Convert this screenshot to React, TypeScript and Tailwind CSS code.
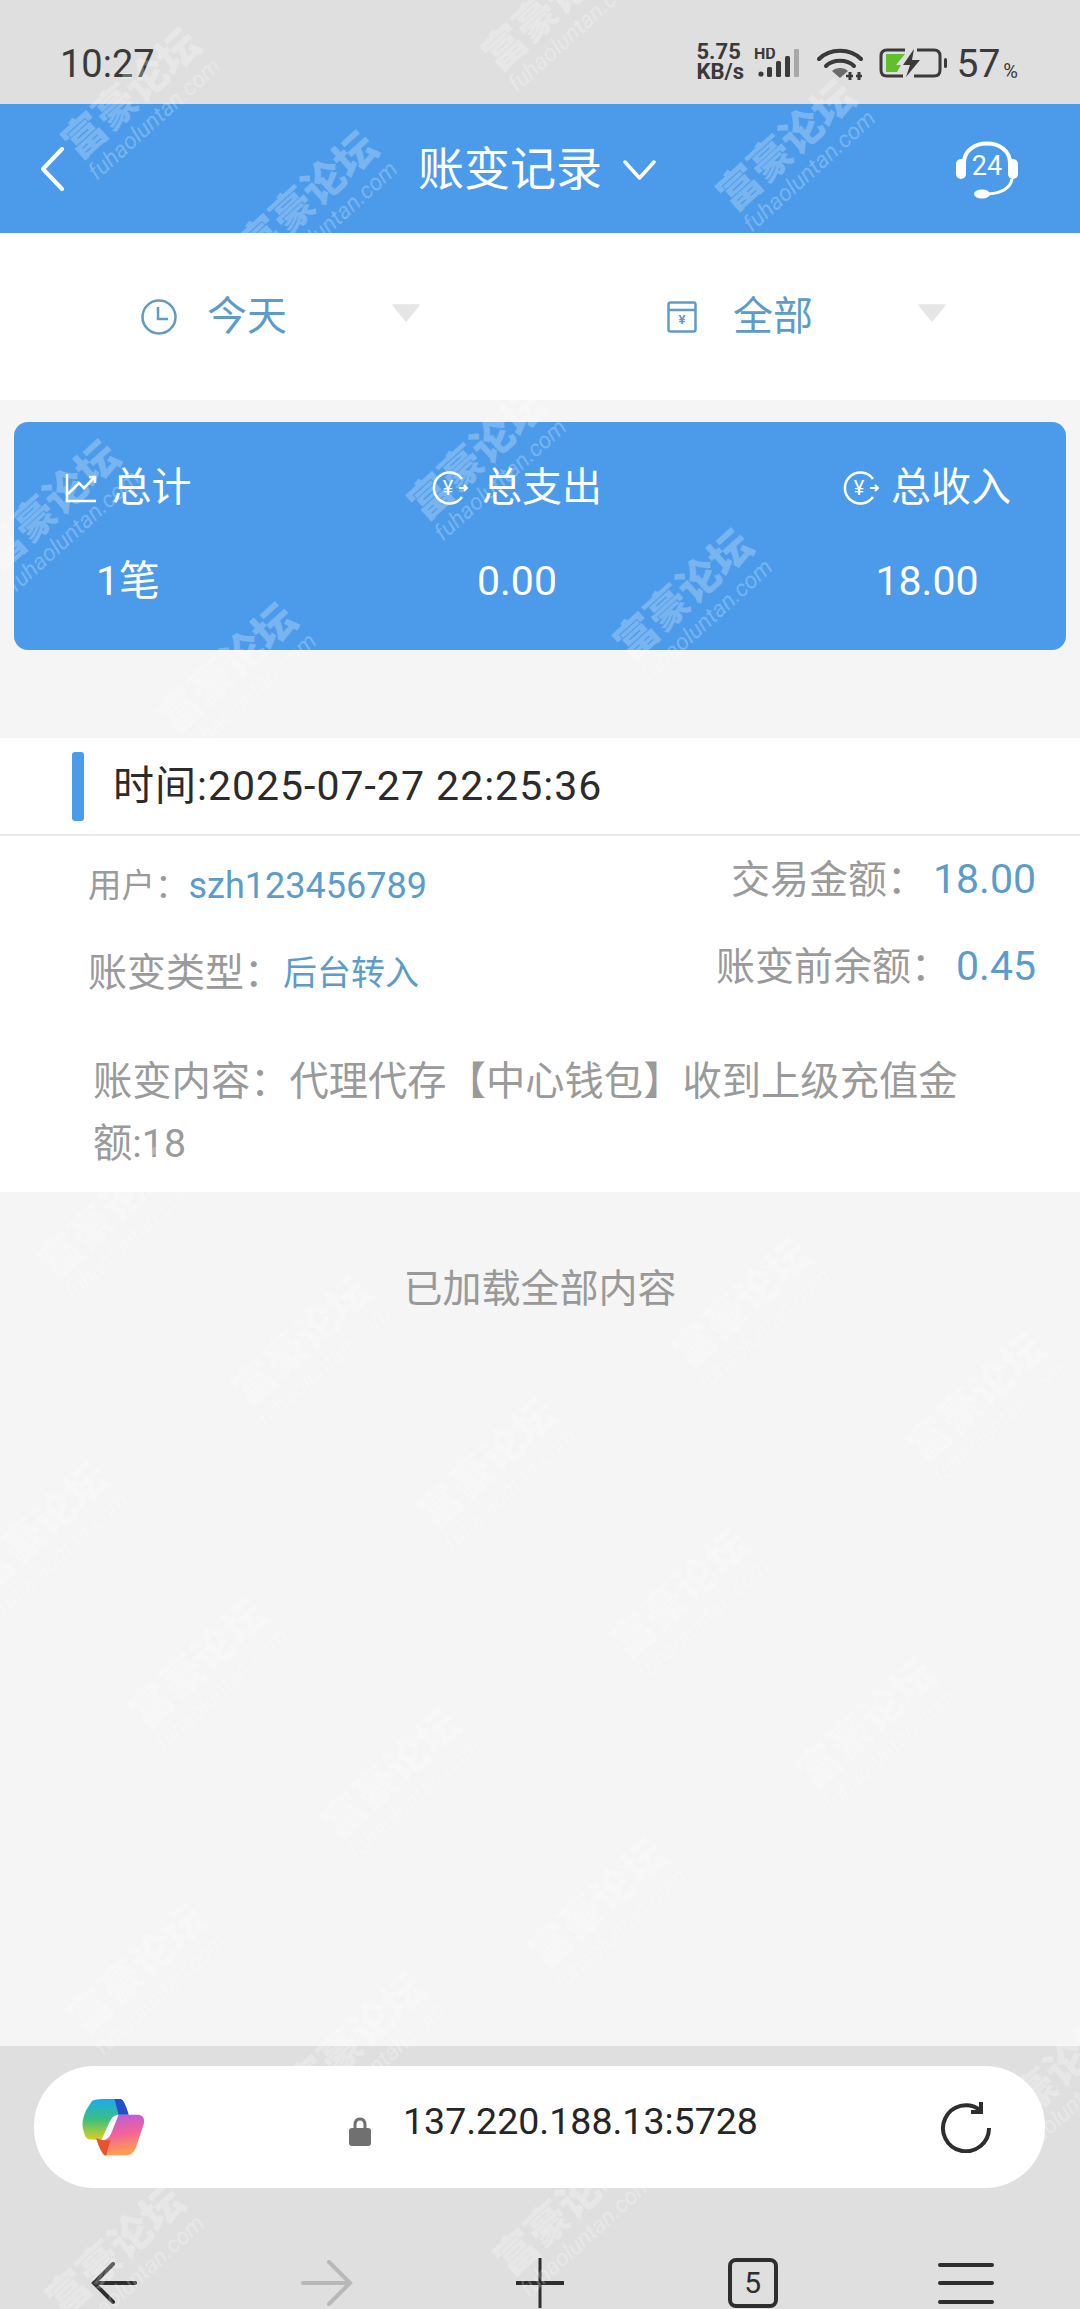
const watermarks = [
  "left-[140px] top-[103px]",
  "left-[317px] top-[206px]",
  "left-[795px] top-[155px]",
  "left-[560px] top-[15px]",
  "left-[486px] top-[464px]",
  "left-[59px] top-[515px]",
  "left-[692px] top-[604px]",
  "left-[236px] top-[678px]",
  "left-[116px] top-[1223px]",
  "left-[310px] top-[1350px]",
  "left-[750px] top-[1313px]",
  "left-[985px] top-[1407px]",
  "left-[496px] top-[1473px]",
  "left-[48px] top-[1537px]",
  "left-[689px] top-[1603px]",
  "left-[207px] top-[1673px]",
  "left-[875px] top-[1733px]",
  "left-[400px] top-[1783px]",
  "left-[606px] top-[1913px]",
  "left-[146px] top-[1978px]",
  "left-[365px] top-[2047px]",
  "left-[1060px] top-[2087px]",
  "left-[572px] top-[2220px]",
  "left-[124px] top-[2260px]",
];

function Watermark({ place }: { place: string }) {
  return (
    <div className={`absolute w-0 h-0 pointer-events-none ${place}`}>
      <div className="absolute -translate-x-1/2 -translate-y-1/2 -rotate-[42deg] flex flex-col items-center whitespace-nowrap text-white/25">
        <span className="text-[42px] leading-[44px] font-black">富豪论坛</span>
        <span className="text-[23px] leading-[24px] italic">fuhaoluntan.com</span>
      </div>
    </div>
  );
}

function SignalIcon() {
  return (
    <svg width="50" height="30" viewBox="0 0 50 30" fill="#3a3a3a" aria-hidden="true">
      <text x="0" y="11" fontSize="16" fontWeight="700" fill="#3a3a3a">HD</text>
      <circle cx="7" cy="26" r="2.6" />
      <rect x="13" y="19" width="5" height="10" rx="1.5" />
      <rect x="22" y="13" width="5" height="16" rx="1.5" />
      <rect x="31" y="8" width="5" height="21" rx="1.5" />
      <rect x="40" y="1" width="5" height="28" rx="1" fill="#a8a8a8" />
    </svg>
  );
}

function WifiIcon() {
  return (
    <svg width="46" height="34" viewBox="0 0 46 34" fill="none" stroke="#3a3a3a" strokeWidth="4" aria-hidden="true">
      <path d="M2 12 C13 1 33 1 44 12" strokeLinecap="round" />
      <path d="M9 19 C16 12 30 12 37 19" strokeLinecap="round" />
      <path d="M23 31 L15 24 C19 20 27 20 31 24 Z" fill="#6a6a6a" stroke="none" />
      <path d="M33 25 v8 M42 25 v8" strokeWidth="3" />
      <path d="M29 29 h7 M39 29 h6" strokeWidth="2.5" />
    </svg>
  );
}

function BatteryIcon() {
  return (
    <svg width="69" height="30" viewBox="0 0 69 30" fill="none" aria-hidden="true">
      <path d="M26 2 H8 Q2 2 2 8 V22 Q2 28 8 28 H24" stroke="#3a3a3a" strokeWidth="3" />
      <path d="M38 2 H55 Q61 2 61 8 V22 Q61 28 55 28 H35" stroke="#3a3a3a" strokeWidth="3" />
      <path d="M7 6 H26 L17 17 H22 L18 24 H7 Z" fill="#62bd2f" />
      <path d="M35 1 L24 17 H31 L27 29 L41 12 H33 Z" fill="#3a3a3a" />
      <rect x="65" y="10" width="3" height="10" rx="1.5" fill="#3a3a3a" />
    </svg>
  );
}

function StatusBar() {
  return (
    <div className="h-[104px] bg-[#dfdfdf] flex items-start justify-between pl-[60px] pr-[62px] pt-[44px] text-[#3a3a3a]">
      <span className="text-[38px] leading-[40px]">10:27</span>
      <div className="flex items-start">
        <div className="flex flex-col text-[22px] leading-[20px] font-bold -mt-[2px] w-[57px]">
          <span>5.75</span>
          <span>KB/s</span>
        </div>
        <div className="mt-[4px]">
          <SignalIcon />
        </div>
        <div className="ml-[13px] mt-[3px]">
          <WifiIcon />
        </div>
        <div className="ml-[16px] mt-[4px]">
          <BatteryIcon />
        </div>
        <span className="ml-[9px] text-[39px] leading-[40px]">57</span>
        <span className="ml-[3px] mt-[15px] text-[20px] leading-[24px]">%</span>
      </div>
    </div>
  );
}

function HeadsetIcon() {
  return (
    <svg width="64" height="60" viewBox="0 0 64 60" fill="none" aria-hidden="true">
      <path d="M9 24 C9 -2 55 -2 55 24" stroke="white" strokeWidth="4" />
      <rect x="1" y="20" width="10" height="20" rx="5" fill="white" />
      <rect x="53" y="20" width="10" height="20" rx="5" fill="white" />
      <path d="M57 40 C55 50 46 54 34 55" stroke="white" strokeWidth="3" />
      <ellipse cx="27" cy="55" rx="8" ry="4.5" fill="white" />
      <text x="32" y="36" textAnchor="middle" fontSize="27" fill="white">24</text>
    </svg>
  );
}

function Header() {
  return (
    <div className="h-[129px] bg-[#4c9bea] flex items-center pl-[40px] pr-[61px] text-white">
      <svg width="24" height="44" viewBox="0 0 24 44" fill="none" stroke="white" strokeWidth="4" strokeLinecap="round" strokeLinejoin="round" aria-hidden="true">
        <polyline points="22 2 3 22 22 42" />
      </svg>
      <span className="ml-[354px] text-[46px] leading-[56px]">账变记录</span>
      <svg className="ml-[21px] mt-[2px]" width="33" height="20" viewBox="0 0 33 20" fill="none" stroke="white" strokeWidth="3.5" strokeLinecap="round" strokeLinejoin="round" aria-hidden="true">
        <polyline points="2 2 16.5 18 31 2" />
      </svg>
      <div className="ml-auto">
        <HeadsetIcon />
      </div>
    </div>
  );
}

function Triangle() {
  return (
    <svg width="30" height="18" viewBox="0 0 30 18" aria-hidden="true">
      <path d="M2 1 H28 L15 17 Z" fill="#e6e6e6" stroke="#e6e6e6" strokeWidth="1.5" strokeLinejoin="round" />
    </svg>
  );
}

function FilterBar() {
  return (
    <div className="h-[167px] bg-white flex items-center text-[40px] leading-[48px] text-[#5b9ccb]">
      <div className="ml-[141px] flex items-center">
        <svg width="36" height="36" viewBox="0 0 36 36" fill="none" stroke="#5f9cc4" strokeWidth="2.5" aria-hidden="true">
          <circle cx="18" cy="18" r="16.5" />
          <polyline points="17 8 17 20 27 20" />
        </svg>
        <span className="ml-[30px]">今天</span>
        <div className="ml-[104px] -mt-[8px]">
          <Triangle />
        </div>
      </div>
      <div className="ml-[246px] flex items-center">
        <svg width="30" height="32" viewBox="0 0 30 32" fill="none" stroke="#5f9cc4" strokeWidth="2.5" aria-hidden="true">
          <rect x="1.5" y="1.5" width="27" height="29" rx="2" />
          <line x1="1.5" y1="9" x2="28.5" y2="9" />
          <text x="15" y="23" textAnchor="middle" fontSize="13" fontWeight="700" fill="#5f9cc4" stroke="none">¥</text>
        </svg>
        <span className="ml-[36px]">全部</span>
        <div className="ml-[104px] -mt-[8px]">
          <Triangle />
        </div>
      </div>
    </div>
  );
}

function TrendIcon() {
  return (
    <svg width="32" height="30" viewBox="0 0 32 30" fill="none" stroke="white" strokeWidth="2.5" aria-hidden="true">
      <polyline points="2 1 2 28 31 28" />
      <polyline points="3 21 14 10 19 15 29 5" />
      <polyline points="24 4 30 4 30 10" />
    </svg>
  );
}

function YenIcon() {
  return (
    <svg width="36" height="34" viewBox="0 0 36 34" fill="none" stroke="white" strokeWidth="2.5" aria-hidden="true">
      <path d="M30 8 A15.5 15.5 0 1 0 30 26" />
      <text x="16" y="24" textAnchor="middle" fontSize="20" fill="white" stroke="none">¥</text>
      <path d="M27 17 H35 M32 14 L35 17 L32 20" strokeWidth="2" />
    </svg>
  );
}

function SummaryCard() {
  return (
    <div className="h-[228px] rounded-[14px] bg-[#4c9bea] flex text-white pt-[46px]">
      <div className="w-[228px] flex flex-col items-center">
        <div className="h-[40px] flex items-center gap-[15px]">
          <TrendIcon />
          <span className="text-[40px] leading-[40px]">总计</span>
        </div>
        <span className="mt-[49px] text-[41px] leading-[48px]">1笔</span>
      </div>
      <div className="ml-[160px] w-[230px] flex flex-col items-center">
        <div className="h-[40px] flex items-center gap-[14px]">
          <YenIcon />
          <span className="text-[40px] leading-[40px]">总支出</span>
        </div>
        <span className="mt-[49px] text-[41px] leading-[48px]">0.00</span>
      </div>
      <div className="ml-[180px] w-[230px] flex flex-col items-center">
        <div className="h-[40px] flex items-center gap-[12px]">
          <YenIcon />
          <span className="text-[40px] leading-[40px]">总收入</span>
        </div>
        <span className="mt-[49px] text-[41px] leading-[48px]">18.00</span>
      </div>
    </div>
  );
}

function RecordRow() {
  return (
    <div className="mt-[88px] bg-white">
      <div className="h-[98px] flex items-center border-b-2 border-[#e8e8e8] pl-[72px]">
        <div className="w-[12px] h-[69px] rounded-[3px] bg-[#4c9bea]" />
        <span className="ml-[29px] text-[41px] leading-[50px] tracking-[1px] text-[#2b2b2b]">时间:2025-07-27 22:25:36</span>
      </div>
      <div className="flex justify-between pl-[88px] pr-[44px] pt-[25px]">
        <div className="flex flex-col gap-[37px] text-[#9a9a9a]">
          <div className="h-[50px] flex items-center text-[33.5px]">
            用户：<span className="text-[36px] text-[#5b9ccb]">szh123456789</span>
          </div>
          <div className="h-[50px] flex items-center text-[39px]">
            账变类型：<span className="text-[34px] text-[#5b9ccb]">后台转入</span>
          </div>
        </div>
        <div className="flex flex-col items-end gap-[37px] text-[#9a9a9a] text-[39px] -mt-[6px]">
          <div className="h-[50px] flex items-center">
            交易金额：<span className="ml-[7px] text-[41px] text-[#5b9ccb]">18.00</span>
          </div>
          <div className="h-[50px] flex items-center">
            账变前余额：<span className="ml-[6px] text-[41px] text-[#5b9ccb]">0.45</span>
          </div>
        </div>
      </div>
      <p className="mt-[53px] ml-[93px] w-[900px] pb-[17px] text-[39.3px] leading-[62px] text-[#9a9a9a]">
        账变内容：代理代存【中心钱包】收到上级充值金额:18
      </p>
    </div>
  );
}

function CopilotLogo() {
  return (
    <svg width="66" height="60" viewBox="22 16 65 64" preserveAspectRatio="none" aria-hidden="true">
      <defs>
        <linearGradient id="left-ribbon" x1="0" y1="0" x2="0" y2="1">
          <stop offset="0" stopColor="#1aa8f3" />
          <stop offset="0.5" stopColor="#3cc07f" />
          <stop offset="1" stopColor="#e0cf1c" />
        </linearGradient>
        <linearGradient id="right-ribbon" x1="0" y1="0" x2="0.2" y2="1">
          <stop offset="0" stopColor="#b05ce6" />
          <stop offset="0.55" stopColor="#f2629a" />
          <stop offset="1" stopColor="#ff9c52" />
        </linearGradient>
      </defs>
      <path d="M34 20 Q38 18 44 18 L62 18 Q66 19 69 35 L59 35 Q54 36 51 43 L43 62 L30 61 Q27 60 25 50 Q23 42 28 30 Z" fill="url(#left-ribbon)" />
      <path d="M56 18 L62 18 Q66 19 70 35 L60 35 Z" fill="#2350c9" />
      <path d="M60 35 L80 35 Q86 36 85 44 L77 70 Q74 78 68 78 L46 78 Q42 74 38 60 L44 62 Q50 62 53 54 Z" fill="url(#right-ribbon)" />
      <path d="M38 60 L44 62 L52 62 Q49 72 48 78 L46 78 Q42 74 38 60 Z" fill="#e8532b" />
    </svg>
  );
}

function BrowserChrome() {
  return (
    <div className="h-[263px] bg-[#dfdfdf] pt-[20px] overflow-hidden">
      <div className="mx-[34px] w-[1011px] h-[122px] rounded-[60px] bg-white flex items-center pl-[46px] pr-[53px]">
        <CopilotLogo />
        <svg className="ml-[202px] mt-[10px]" width="24" height="30" viewBox="0 0 24 30" aria-hidden="true">
          <path d="M7 13 V8 Q7 2 12 2 Q17 2 17 8 V13" fill="none" stroke="#707070" strokeWidth="3" />
          <rect x="1" y="11" width="22" height="18" rx="3" fill="#707070" />
        </svg>
        <span className="ml-[31px] -mt-[12px] text-[37.5px] leading-[48px] text-[#262626]">137.220.188.13:5728</span>
        <svg className="ml-auto" width="52" height="52" viewBox="0 0 52 52" fill="none" stroke="#2e2e2e" strokeWidth="4" aria-hidden="true">
          <path d="M40 9 A23 23 0 1 0 49 27" />
          <polyline points="41 1 41 11 31 11" strokeWidth="4" />
        </svg>
      </div>
      <div className="mt-[69px] px-[8px] h-[52px] grid grid-cols-5 items-center justify-items-center">
        <svg width="46" height="42" viewBox="0 0 46 42" fill="none" stroke="#2e2e2e" strokeWidth="4" strokeLinecap="round" aria-hidden="true">
          <polyline points="22 2 3 21 22 40" />
          <line x1="4" y1="21" x2="44" y2="21" />
        </svg>
        <svg width="52" height="46" viewBox="0 0 52 46" fill="none" stroke="#b8b8b8" strokeWidth="4" strokeLinecap="round" aria-hidden="true">
          <polyline points="28 2 49 23 28 44" />
          <line x1="2" y1="23" x2="48" y2="23" />
        </svg>
        <svg width="50" height="50" viewBox="0 0 50 50" fill="none" stroke="#2e2e2e" strokeWidth="4" aria-hidden="true">
          <line x1="1" y1="25" x2="49" y2="25" />
          <line x1="25" y1="0" x2="25" y2="50" strokeWidth="3" />
        </svg>
        <div className="w-[50px] h-[50px] rounded-[8px] border-[4px] border-[#2e2e2e] flex items-center justify-center text-[30px] leading-none text-[#2e2e2e]">
          5
        </div>
        <div className="w-[56px] h-[41px] flex flex-col justify-between">
          <div className="h-[4px] bg-[#2e2e2e] rounded-full" />
          <div className="h-[4px] bg-[#2e2e2e] rounded-full" />
          <div className="h-[4px] bg-[#2e2e2e] rounded-full" />
        </div>
      </div>
    </div>
  );
}

export default function App() {
  return (
    <div className="relative w-[1080px] h-[2309px] overflow-hidden flex flex-col bg-[#f5f5f5] [font-family:Roboto,'Noto_Sans_CJK_SC',sans-serif]">
      <StatusBar />
      <Header />
      <FilterBar />
      <div className="flex-1 flex flex-col">
        <div className="pt-[22px] px-[14px]">
          <SummaryCard />
        </div>
        <RecordRow />
        <p className="mt-[72px] text-center text-[39px] leading-[50px] text-[#999999]">已加载全部内容</p>
      </div>
      <BrowserChrome />
      {watermarks.map((place) => (
        <Watermark key={place} place={place} />
      ))}
    </div>
  );
}
